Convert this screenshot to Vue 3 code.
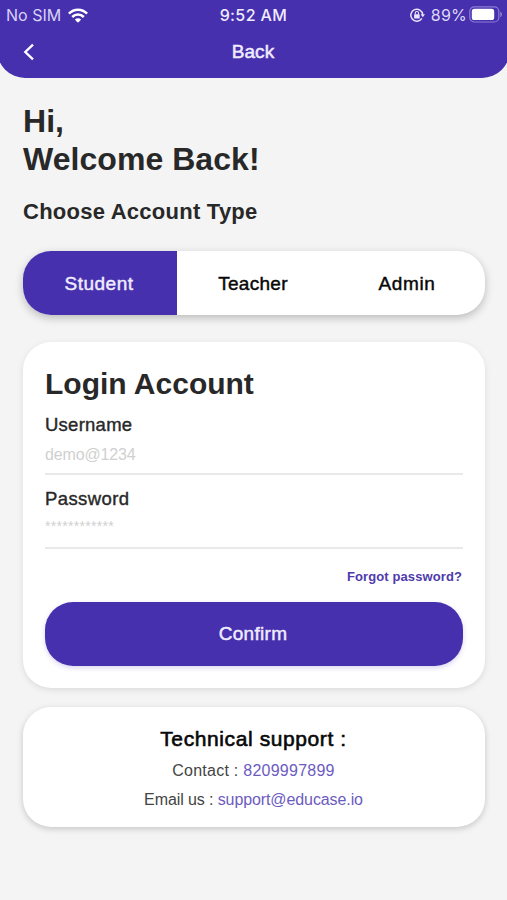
<script setup>
import { ref } from 'vue'

const accountTypes = ['Student', 'Teacher', 'Admin']
const selected = ref('Student')
</script>

<template>
  <main class="screen">
    <header class="top">
      <div class="status">
        <div class="carrier">
          <span class="sim">No SIM</span>
          <svg class="wifi" viewBox="0 0 20 15" width="20" height="15">
            <g fill="none" stroke="#fff" stroke-width="2.5">
              <path d="M0.9 5.6C6 .4 14 .4 19.1 5.6" />
              <path d="M4.2 9C7.4 5.8 12.6 5.8 15.8 9" />
            </g>
            <path d="M6.9 11.6C8.6 9.9 11.4 9.9 13.1 11.6L10.9 14Q10 14.8 9.1 14Z" fill="#fff" />
          </svg>
        </div>
        <span class="clock">9:52 AM</span>
        <div class="power">
          <svg class="lock" viewBox="0 0 15 14" width="15" height="14">
            <path d="M11.9 10.4A6 6 0 1 1 12.8 6.6" fill="none" stroke="#e9e4fb" stroke-width="1.5" />
            <path d="M10.6 6.2H15L12.8 9.2Z" fill="#e9e4fb" />
            <rect x="4.1" y="6.2" width="5.6" height="4.3" rx=".5" fill="#e9e4fb" />
            <path d="M5.3 6.4V5.1a1.6 1.6 0 0 1 3.2 0v1.3" fill="none" stroke="#e9e4fb" stroke-width="1.1" />
          </svg>
          <span class="percent">89%</span>
          <svg class="battery" viewBox="0 0 34 17" width="34" height="17">
            <rect x=".8" y=".8" width="29" height="15.2" rx="4.5" fill="none" stroke="#8c7dd2" stroke-width="1.2" />
            <rect x="2.8" y="2.8" width="22.4" height="11.2" rx="2.6" fill="#fff" />
            <path d="M31.2 5.6C33.6 6.5 33.6 10.3 31.2 11.2Z" fill="#8c7dd2" />
          </svg>
        </div>
      </div>
      <nav class="nav">
        <svg class="chevron" viewBox="0 0 12 18" width="12" height="18">
          <path d="M10 1.7L2.3 9L10 16.3" fill="none" stroke="#fff" stroke-width="2.3" />
        </svg>
        <span class="nav-title">Back</span>
      </nav>
    </header>

    <section class="body">
      <h1 class="greeting">Hi,<br />Welcome Back!</h1>
      <h2 class="choose">Choose Account Type</h2>

      <div class="tabs">
        <button
          v-for="type in accountTypes"
          :key="type"
          class="tab"
          :class="[type.toLowerCase(), { active: type === selected }]"
          @click="selected = type"
        >{{ type }}</button>
      </div>

      <form class="card login" @submit.prevent>
        <h2 class="login-title">Login Account</h2>
        <div class="field">
          <span class="label username">Username</span>
          <span class="value">demo@1234</span>
        </div>
        <div class="field second">
          <span class="label password">Password</span>
          <span class="value stars">************</span>
        </div>
        <a class="forgot">Forgot password?</a>
        <button class="confirm">Confirm</button>
      </form>

      <section class="card support">
        <h3 class="support-title">Technical support :</h3>
        <p class="line contact">Contact : <a class="link">8209997899</a></p>
        <p class="line email">Email us : <a class="link">support@educase.io</a></p>
      </section>
    </section>
  </main>
</template>

<style>
body {
  background: #f4f4f4;
}
</style>

<style scoped>
* {
  box-sizing: border-box;
  margin: 0;
}
.screen {
  width: 507px;
  height: 900px;
  overflow: hidden;
  background: #f4f4f4;
  color: #282828;
  font-family: "Liberation Sans", Arial, sans-serif;
}
.top {
  height: 78px;
  margin: 0 -3px;
  padding: 0 3px;
  background: #4630ae;
  border-radius: 0 0 28px 28px;
  color: #f0ecff;
}
.status {
  display: grid;
  grid-template-columns: 1fr auto 1fr;
  align-items: center;
  height: 30px;
  padding: 0 4px 0 6px;
  font-family: Inter, sans-serif;
  font-size: 16px;
  line-height: 30px;
}
.carrier,
.power {
  display: flex;
  align-items: center;
}
.sim {
  width: 55px;
  color: #d9d2f7;
  white-space: nowrap;
}
.wifi {
  margin-left: 7px;
}
.clock {
  padding-right: 2px;
  font-weight: 500;
  letter-spacing: 0.4px;
}
.power {
  justify-content: flex-end;
}
.lock {
  margin-right: 6px;
}
.percent {
  margin-right: 2px;
  color: #ded8f8;
  letter-spacing: 0.2px;
}
.battery {
  margin-bottom: 1px;
}
.nav {
  display: grid;
  grid-template-columns: 1fr auto 1fr;
  align-items: center;
  height: 43px;
  padding: 0 24px 0 23px;
}
.nav-title {
  font-size: 19px;
  letter-spacing: 0.1px;
  -webkit-text-stroke: 0.5px;
}
.body {
  padding: 24px 22px 0 23px;
}
.greeting {
  font-size: 32px;
  line-height: 38px;
  letter-spacing: 0.05px;
}
.choose {
  margin-top: 20px;
  font-size: 22px;
  line-height: 28px;
  letter-spacing: 0.25px;
}
.tabs {
  display: grid;
  grid-template-columns: repeat(3, 1fr);
  height: 64px;
  margin-top: 25px;
  overflow: hidden;
  border-radius: 28px;
  background: #fff;
  box-shadow: 0 3px 8px rgba(0, 0, 0, 0.24);
}
.tab,
.confirm {
  padding: 1px 2px 0 0;
  border: 0;
  background: none;
  color: #080808;
  font-family: inherit;
  font-size: 19px;
  -webkit-text-stroke: 0.45px;
}
.student {
  letter-spacing: 0.5px;
}
.teacher {
  letter-spacing: 0.3px;
}
.admin {
  letter-spacing: 0.6px;
}
.tab.active {
  background: #4630ae;
  color: #f0ecff;
}
.card {
  border-radius: 28px;
  background: #fff;
}
.login {
  display: flex;
  flex-direction: column;
  height: 346px;
  margin-top: 27px;
  padding: 24px 22px 22px;
  box-shadow: 0 2px 6px rgba(0, 0, 0, 0.1);
}
.login-title {
  font-size: 30px;
  line-height: 36px;
}
.field {
  display: flex;
  flex-direction: column;
  height: 73px;
  padding-top: 11px;
  border-bottom: 2px solid #e9e9e9;
}
.second {
  height: 74px;
  padding-top: 12px;
}
.label {
  font-size: 18.5px;
  line-height: 24px;
  -webkit-text-stroke: 0.4px;
}
.username {
  letter-spacing: 0.25px;
}
.password {
  letter-spacing: 0.4px;
}
.value {
  margin-top: 6px;
  color: #d0d0d0;
  font-size: 16px;
  line-height: 24px;
  letter-spacing: -0.15px;
}
.stars {
  margin-top: 3px;
  font-size: 14px;
  letter-spacing: 0.3px;
}
.forgot {
  align-self: flex-end;
  margin: 18px 1px 0 0;
  color: #4e3aac;
  font-size: 13px;
  font-weight: 700;
  line-height: 20px;
  letter-spacing: 0.1px;
}
.confirm {
  flex: none;
  height: 64px;
  margin-top: 15px;
  padding-top: 0;
  border-radius: 28px;
  background: #4630ae;
  color: #f0ecff;
  letter-spacing: 0.3px;
  box-shadow: 0 2px 5px rgba(70, 48, 174, 0.2);
}
.support {
  height: 120px;
  margin-top: 19px;
  padding: 16px 1px 0 0;
  text-align: center;
  box-shadow: 0 2px 6px rgba(0, 0, 0, 0.19);
}
.support-title {
  color: #080808;
  font-size: 21px;
  font-weight: 400;
  line-height: 32px;
  letter-spacing: 0.6px;
  -webkit-text-stroke: 0.6px;
}
.line {
  color: #444;
  font-size: 16px;
  line-height: 29px;
}
.support-title + .line {
  margin-top: 1px;
}
.contact {
  letter-spacing: 0.25px;
}
.email {
  letter-spacing: -0.1px;
}
.link {
  color: #6c5bc0;
}
</style>
